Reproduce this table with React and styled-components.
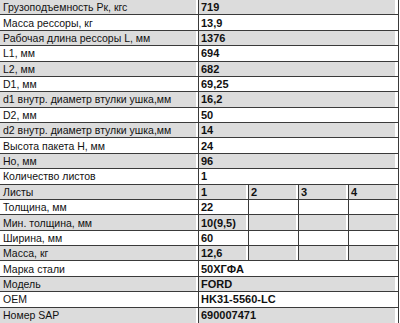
import React from "react";
import styled, { createGlobalStyle } from "styled-components";

const Global = createGlobalStyle`
  html, body { margin: 0; padding: 0; background: #fff; }
  body { font-family: "Liberation Sans", Arial, sans-serif; }
`;

const Sheet = styled.div`
  width: 399px;
  height: 323px;
  display: grid;
  grid-template-rows: repeat(21, 1fr);
  border-right: 1px solid #3a3a3a;
  box-sizing: border-box;
  color: #111;
  font-size: 11px;
`;

const Row = styled.div`
  display: grid;
  grid-template-columns: 199px 1fr;
  border-bottom: ${({ $last }) => ($last ? "none" : "1px solid #3a3a3a")};
  background: ${({ $shade }) => ($shade ? "#dcdcdc" : "#fff")};
  min-height: 0;
`;

const Label = styled.div`
  display: flex;
  align-items: center;
  padding-left: 3px;
  font-size: 10.5px;
  border-right: 1px solid #3a3a3a;
  white-space: nowrap;
  overflow: hidden;
  box-shadow: inset -2px 0 0 #fff;
`;

const Value = styled.div`
  display: flex;
  align-items: center;
  padding-left: 2px;
  font-weight: bold;
  white-space: nowrap;
  overflow: hidden;
  box-shadow: inset -3px 0 0 #fff;
`;

const Split = styled.div`
  display: grid;
  grid-template-columns: 50px 50px 50px 1fr;
`;

const SubCell = styled.div`
  display: flex;
  align-items: center;
  padding-left: 2px;
  font-weight: bold;
  border-right: ${({ $last }) => ($last ? "none" : "1px solid #3a3a3a")};
  box-shadow: inset -2px 0 0 #fff;
`;

const rows = [
  ["Грузоподъемность Рк, кгс", "719"],
  ["Масса рессоры, кг", "13,9"],
  ["Рабочая длина рессоры L, мм", "1376"],
  ["L1, мм", "694"],
  ["L2, мм", "682"],
  ["D1, мм", "69,25"],
  ["d1 внутр. диаметр втулки ушка,мм", "16,2"],
  ["D2, мм", "50"],
  ["d2 внутр. диаметр втулки ушка,мм", "14"],
  ["Высота пакета H, мм", "24"],
  ["Ho, мм", "96"],
  ["Количество листов", "1"],
  ["Листы", ["1", "2", "3", "4"]],
  ["Толщина, мм", ["22", "", "", ""]],
  ["Мин. толщина, мм", ["10(9,5)", "", "", ""]],
  ["Ширина, мм", ["60", "", "", ""]],
  ["Масса, кг", ["12,6", "", "", ""]],
  ["Марка стали", "50ХГФА"],
  ["Модель", "FORD"],
  ["OEM", "HK31-5560-LC"],
  ["Номер SAP", "690007471"],
];

export default function App() {
  return (
    <>
      <Global />
      <Sheet>
        {rows.map(([label, value], i) => {
          const shade = i % 2 === 0;
          return (
            <Row key={label} $shade={shade} $last={i === rows.length - 1}>
              <Label>{label}</Label>
              {Array.isArray(value) ? (
                <Split>
                  {value.map((v, j) => (
                    <SubCell key={j} $last={j === 3}>
                      {v}
                    </SubCell>
                  ))}
                </Split>
              ) : (
                <Value>{value}</Value>
              )}
            </Row>
          );
        })}
      </Sheet>
    </>
  );
}
